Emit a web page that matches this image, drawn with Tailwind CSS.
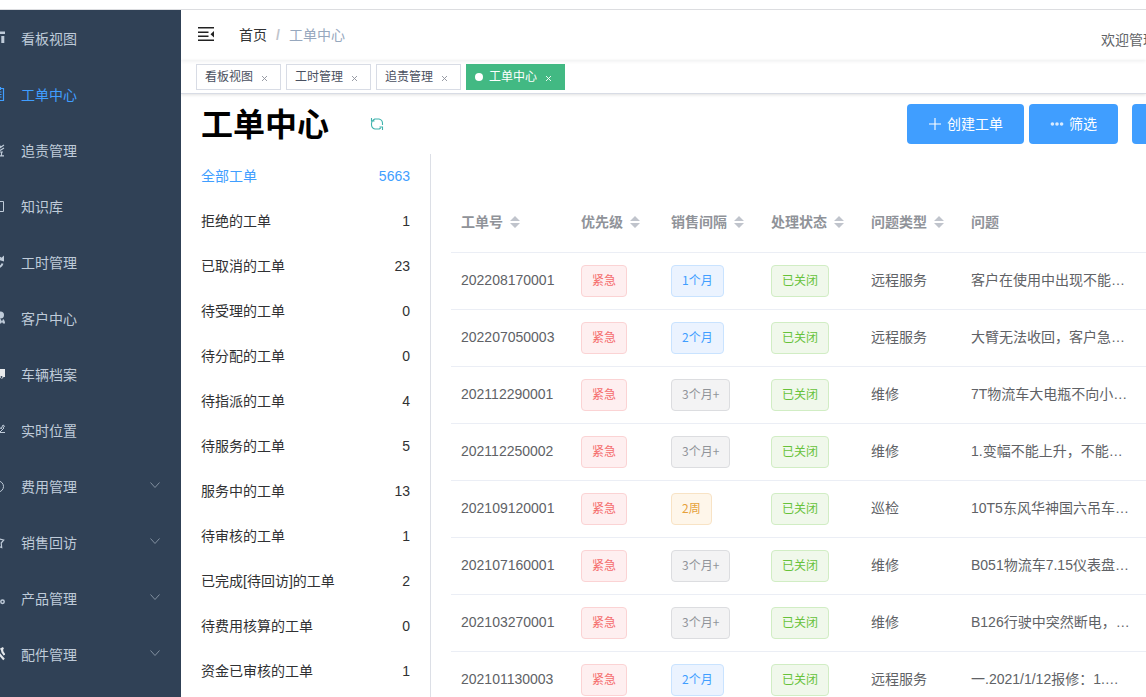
<!DOCTYPE html>
<html lang="zh-CN">
<head>
<meta charset="utf-8">
<meta name="viewport" content="width=device-width, initial-scale=1">
<title>工单中心</title>
<script src="https://cdn.jsdelivr.net/npm/@tailwindcss/browser@4"></script>
</head>
<body class="flex h-screen flex-col overflow-hidden bg-white pt-[9px] font-['Liberation_Sans','Noto_Sans_CJK_SC',sans-serif] text-sm text-[#303133]">
<div class="flex min-h-0 flex-1 border-t border-[#dcdde0]">

  <aside class="w-[181px] shrink-0 overflow-hidden bg-[#304156] pt-px">
    <nav aria-label="主菜单"><ul id="menu" class="-ml-[9px]"></ul></nav>
  </aside>

  <main class="flex min-w-0 flex-1 flex-col overflow-hidden">
    <header class="relative flex h-[50px] shrink-0 items-center pl-4 shadow-[0_1px_4px_rgba(0,21,41,0.08)]">
      <button aria-label="收起菜单" class="block">
        <svg class="h-[18px] w-[18px]" viewBox="0 0 18 18" fill="#222"><path d="M1 1h16v1.500H1zM1 5.500h10.500V7H1zM1 9.500h10.500V11H1zM1 13.500h16V15H1zM17 5v6.400L13.500 8.200z"/></svg>
      </button>
      <nav aria-label="面包屑" class="ml-6 flex items-center">
        <a href="#" class="text-[#303133]">首页</a>
        <span class="mx-[9px] font-bold text-[#c0c4cc]">/</span>
        <span class="text-[#97a8be]">工单中心</span>
      </nav>
      <span class="-mr-[25px] ml-auto pt-[10px] whitespace-nowrap text-[#606266]">欢迎管理员</span>
    </header>

    <div id="tabs" class="relative flex h-[34px] shrink-0 items-center gap-[5px] border-b border-[#d8dce5] pl-[15px] shadow-[0_1px_3px_rgba(0,0,0,0.12)]"></div>

    <div class="flex h-[60px] shrink-0 items-center pl-5">
      <h1 class="pt-[2px] text-[32px] leading-10 font-bold whitespace-nowrap text-black">工单中心</h1>
      <button aria-label="刷新" class="ml-[41px]">
        <svg class="h-[14px] w-[14px]" viewBox="0 0 14 14" fill="none" stroke="#3fb3ad" stroke-width="1.1"><path d="M1.500 7.500V6.500A4.500 4.500 0 0 1 3.300 3L4.700 2H9A4.500 4.500 0 0 1 12.500 6.500V8M1.500 6.500v1A4.500 4.500 0 0 0 5 12h4.300l1.400-1M1.500 1v3h3M12.500 13v-3h-3"/></svg>
      </button>
      <div class="-mr-[103px] ml-auto flex shrink-0 text-white">
        <button class="flex h-10 items-center gap-[5px] rounded bg-[#409eff] px-[21px]">
          <svg class="h-[14px] w-[14px]" viewBox="0 0 14 14" stroke="#fff" stroke-width="1.1"><path d="M7 1v12M1 7h12"/></svg>创建工单
        </button>
        <button class="ml-[5px] flex h-10 items-center gap-[5px] rounded bg-[#409eff] px-[21px]">
          <svg class="h-[14px] w-[14px]" viewBox="0 0 14 14" fill="#d8ebff"><circle cx="2.4" cy="7" r="1.8"/><circle cx="7" cy="7" r="1.8"/><circle cx="11.600" cy="7" r="1.8"/></svg>筛选
        </button>
        <button aria-label="更多操作" class="ml-[14px] h-10 w-[117px] rounded bg-[#409eff]"></button>
      </div>
    </div>

    <div class="flex min-h-0 flex-1">
      <ul id="filters" class="w-[250px] shrink-0 overflow-hidden border-r border-[#dcdfe6] pr-5 pl-5"></ul>
      <section class="min-w-0 flex-1 overflow-hidden pt-[38px] pl-5">
        <table class="w-full min-w-[750px] table-fixed border-collapse text-left text-[#606266]">
          <colgroup><col class="w-[120px]"><col class="w-[90px]"><col class="w-[100px]"><col class="w-[100px]"><col class="w-[100px]"><col></colgroup>
          <thead><tr id="head" class="h-[60px] border-b border-[#ebeef5] text-[#909399]"></tr></thead>
          <tbody id="rows"></tbody>
        </table>
      </section>
    </div>
  </main>
</div>

<script>
const menu = [
  ['看板视图', '<path fill="currentColor" d="M0 .500h14v2.500H0zM0 5h9v7H0zM10.300 5h3v7h-3z"/>'],
  ['工单中心', '<path fill="none" stroke="currentColor" stroke-width="1.200" d="M1 1.500h11.500v12H1zM4 0v3M9.500 0v3M3 5h7.500M3 7.500h7.500M3 10h7.500"/>'],
  ['追责管理', '<path fill="none" stroke="currentColor" stroke-width="1.200" d="M1 12.800h12M4 12.500V9h8M10.500 9v3.500M7 6l6-4M9 3l2 1M9 7.500 13 5"/>'],
  ['知识库', '<path fill="none" stroke="currentColor" stroke-width="1" d="M1 2.500h11.500v10H1zM7 2.500v10"/>'],
  ['工时管理', '<path fill="none" stroke="currentColor" stroke-width="2" d="M11.500 8.500a5 5 0 1 1-1.500-5"/><path fill="currentColor" d="M13 .500v6L8 5z"/>'],
  ['客户中心', '<g fill="currentColor"><circle cx="9.500" cy="4" r="3.500"/><path d="M3 12.500C4 8 7 7 9 7l2 3.500L12 8c1.500 1 2 2.500 2 4.500h-2l-1-1.500-1 1.500z"/></g>'],
  ['车辆档案', '<path fill="#e8eaec" d="M3 2h11v8h-1.500a2 2 0 0 1-3 1H0V5z"/><circle cx="10.500" cy="10" r="1" fill="#304156"/>'],
  ['实时位置', '<path fill="none" stroke="currentColor" stroke-width="1" d="M1 10h5l3-5M8 9.500h6M9 9l4-4M9 5l2 .500M10.500 5l1.500-3 1.500 1-1.500 2"/>'],
  ['费用管理', '<circle cx="7" cy="7.500" r="5.500" fill="none" stroke="currentColor"/><path fill="none" stroke="currentColor" d="m4.500 4 2.500 4 1-2M7 8v4"/>', 1],
  ['销售回访', '<path fill="none" stroke="currentColor" stroke-width="1.200" d="M7 1 8.300 4l4.400 1-2.500 3 .5 4.500L7 11l-3.700 1.500.5-4.500-2.500-3 4.400-1z"/>', 1],
  ['产品管理', '<path fill="none" stroke="currentColor" stroke-width="1.500" d="M1 10h7M3 4v6"/><circle cx="11.500" cy="10.700" r="1.700" fill="none" stroke="currentColor" stroke-width="1.500"/>', 1],
  ['配件管理', '<path fill="none" stroke="#e3e7eb" stroke-width="2.200" d="M9.500 2.500 12.500 1M10.500 1l1 4 2 3M7 5.500l6 7"/>', 1]
];
document.getElementById('menu').innerHTML = menu.map(([t, icon, sub], i) => `
  <li><a href="#" class="flex h-14 items-center pr-5 ${i === 1 ? 'text-[#409eff]' : 'text-[#bfcbd9]'}">
    <svg class="mr-4 mb-[3px] h-[14px] w-[14px] shrink-0" viewBox="0 0 14 14">${icon}</svg>
    <span>${t}</span>
    ${sub ? '<svg class="mb-[5px] ml-auto h-3 w-3" viewBox="0 0 12 12" fill="none" stroke="#8290a0"><path d="m1.500 3.500 4.500 5 4.500-5"/></svg>' : ''}
  </a></li>`).join('');

document.getElementById('tabs').innerHTML = ['看板视图', '工时管理', '追责管理', '工单中心'].map((t, i) => `
  <div class="flex h-[26px] items-center border px-2 text-xs ${i === 3 ? 'border-[#42b983] bg-[#42b983] text-white' : 'border-[#d8dce5] bg-white text-[#495060]'}">
    ${i === 3 ? '<span class="mr-[6px] h-2 w-2 rounded-full bg-white"></span>' : ''}
    <a href="#">${t}</a>
    <button aria-label="关闭${t}" class="ml-[3px] flex h-4 w-4 items-end justify-center pb-1"><svg class="h-[5px] w-[5px]" viewBox="0 0 5 5" stroke="${i === 3 ? '#fff' : '#8d929c'}" stroke-width="0.900"><path d="m0 0 5 5M5 0 0 5"/></svg></button>
  </div>`).join('');

const filters = [['全部工单', 5663], ['拒绝的工单', 1], ['已取消的工单', 23], ['待受理的工单', 0], ['待分配的工单', 0], ['待指派的工单', 4], ['待服务的工单', 5], ['服务中的工单', 13], ['待审核的工单', 1], ['已完成[待回访]的工单', 2], ['待费用核算的工单', 0], ['资金已审核的工单', 1]];
document.getElementById('filters').innerHTML = filters.map(([t, n], i) => `
  <li><a href="#" class="flex h-[45px] items-center justify-between pb-px ${i ? '' : 'text-[#409eff]'}"><span>${t}</span><span>${n}</span></a></li>`).join('');

document.getElementById('head').innerHTML = ['工单号', '优先级', '销售间隔', '处理状态', '问题类型', '问题'].map((t, i) => `
  <th scope="col" class="pl-[10px] font-bold whitespace-nowrap"><span class="flex items-center">${t}${i < 5 ? '<button aria-label="排序" class="ml-[7px]"><svg class="h-3 w-[10px]" viewBox="0 0 10 12" fill="#c0c4cc"><path d="M0 5 5 0l5 5zM0 7h10l-5 5z"/></svg></button>' : ''}</span></th>`).join('');

const tone = {
  red: 'border-[#fbd3d4] bg-[#feeff0] text-[#f56c6c]',
  blue: 'border-[#c9e3ff] bg-[#ebf3ff] text-[#409eff]',
  gray: 'border-[#dcdde0] bg-[#f3f3f4] text-[#909399]',
  amber: 'border-[#f8e3c5] bg-[#fef6ea] text-[#e6a23c]',
  green: 'border-[#d1edc4] bg-[#f0f8eb] text-[#67c23a]'
};
const tag = (t, c) => `<span class="inline-block h-8 rounded border px-[10px] align-middle font-['Noto_Sans_CJK_SC',sans-serif] text-xs leading-[28px] whitespace-nowrap ${tone[c]}">${t}</span>`;
const rows = [
  ['202208170001', '1个月', 'blue', '远程服务', '客户在使用中出现不能…'],
  ['202207050003', '2个月', 'blue', '远程服务', '大臂无法收回，客户急…'],
  ['202112290001', '3个月+', 'gray', '维修', '7T物流车大电瓶不向小…'],
  ['202112250002', '3个月+', 'gray', '维修', '1.变幅不能上升，不能…'],
  ['202109120001', '2周', 'amber', '巡检', '10T5东风华神国六吊车…'],
  ['202107160001', '3个月+', 'gray', '维修', 'B051物流车7.15仪表盘…'],
  ['202103270001', '3个月+', 'gray', '维修', 'B126行驶中突然断电，…'],
  ['202101130003', '2个月', 'blue', '远程服务', '一.2021/1/12报修：1.…']
];
document.getElementById('rows').innerHTML = rows.map(r => `
  <tr class="h-[57px] border-b border-[#ebeef5]">
    <td class="pb-[2px] pl-[10px]">${r[0]}</td><td class="pl-[10px]">${tag('紧急', 'red')}</td><td class="pl-[10px]">${tag(r[1], r[2])}</td>
    <td class="pl-[10px]">${tag('已关闭', 'green')}</td><td class="pb-[2px] pl-[10px]">${r[3]}</td><td class="pb-[2px] pl-[10px] whitespace-nowrap">${r[4]}</td>
  </tr>`).join('');
</script>
</body>
</html>
